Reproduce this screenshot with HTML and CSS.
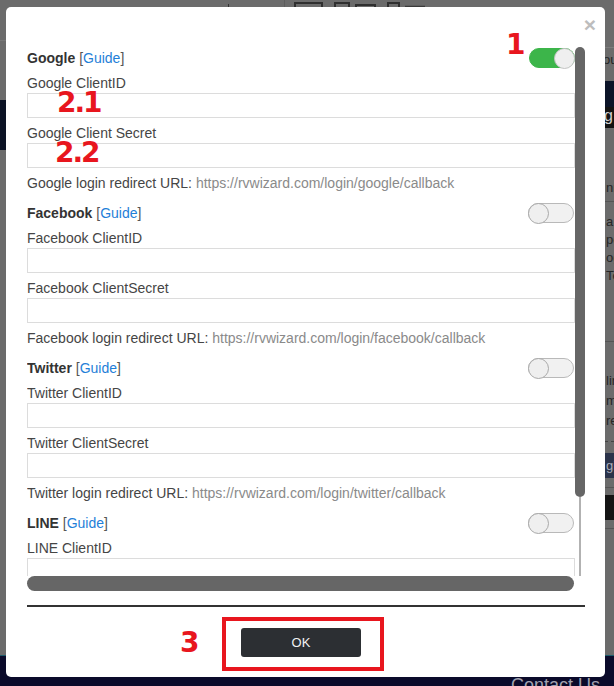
FILE: index.html
```html
<!DOCTYPE html>
<html lang="en">
<head>
<meta charset="utf-8">
<title>Social login settings</title>
<link rel="stylesheet" href="styles.css">
</head>
<body>
<div class="page">
  <div class="page-main">
    <div class="strip strip-left">
      <div class="ls-top"></div>
      <div class="ls-gap"></div>
      <div class="ls-navy"></div>
    </div>
    <div class="page-center">
      <svg class="toolbar" width="599" height="40" viewBox="0 0 599 40">
        <line x1="222.5" y1="4" x2="222.5" y2="8" stroke="#333" stroke-width="1"/>
        <line x1="278.5" y1="0" x2="278.5" y2="40" stroke="#5d5d5d" stroke-width="1"/>
        <rect x="289" y="3" width="27" height="20" fill="none" stroke="#2f2f2f" stroke-width="2"/>
        <rect x="329" y="3" width="14" height="20" fill="none" stroke="#2f2f2f" stroke-width="2"/>
        <rect x="350" y="5" width="19" height="18" fill="none" stroke="#2f2f2f" stroke-width="2"/>
        <rect x="382" y="3" width="11" height="20" fill="none" stroke="#2f2f2f" stroke-width="2"/>
        <line x1="399" y1="6.5" x2="419" y2="6.5" stroke="#3a3a3a" stroke-width="1.5"/>
      </svg>
    </div>
    <div class="strip strip-right">
      <div class="rs-top"></div>
      <div class="rs-text rs-ou">ou</div>
      <div class="rs-navy"></div>
      <div class="rs-black">g</div>
      <div class="rs-gap53"></div>
      <div class="rs-text rs-row14">nn</div>
      <div class="rs-rule rs-rule-a"></div>
      <div class="rs-list">
        <div class="rs-text rs-row18">a</div>
        <div class="rs-text rs-row18">pe</div>
        <div class="rs-text rs-row18">og</div>
        <div class="rs-text rs-row18">Te</div>
      </div>
      <div class="rs-rule rs-rule-b"></div>
      <div class="rs-list2">
        <div class="rs-text rs-row20">lir</div>
        <div class="rs-text rs-row20">m</div>
        <div class="rs-text rs-row20">re</div>
      </div>
      <div class="rs-dash"></div>
      <div class="rs-slate">gi</div>
      <div class="rs-rule rs-rule-c"></div>
      <div class="rs-blk2"></div>
      <div class="rs-rule rs-rule-d"></div>
    </div>
  </div>
  <div class="page-footer"><span class="contact">Contact Us</span></div>
</div>

<div class="modal">
  <div class="modal-header">
    <span class="close">×</span>
  </div>

  <div class="scrollbox">
    <div class="viewport">
      <section class="provider">
        <div class="provider-title">
          <div><b class="name">Google</b> <span class="bracket">[</span><a class="guide">Guide</a><span class="bracket">]</span></div>
          <span class="toggle on"><span class="knob"></span></span>
        </div>
        <div class="field-label">Google ClientID</div>
        <input class="field-input" type="text">
        <div class="field-label">Google Client Secret</div>
        <input class="field-input" type="text">
        <div class="redirect">Google login redirect URL: <span class="url">https://rvwizard.com/login/google/callback</span></div>
      </section>

      <section class="provider">
        <div class="provider-title">
          <div><b class="name">Facebook</b> <span class="bracket">[</span><a class="guide">Guide</a><span class="bracket">]</span></div>
          <span class="toggle"><span class="knob"></span></span>
        </div>
        <div class="field-label">Facebook ClientID</div>
        <input class="field-input" type="text">
        <div class="field-label">Facebook ClientSecret</div>
        <input class="field-input" type="text">
        <div class="redirect">Facebook login redirect URL: <span class="url">https://rvwizard.com/login/facebook/callback</span></div>
      </section>

      <section class="provider">
        <div class="provider-title">
          <div><b class="name">Twitter</b> <span class="bracket">[</span><a class="guide">Guide</a><span class="bracket">]</span></div>
          <span class="toggle"><span class="knob"></span></span>
        </div>
        <div class="field-label">Twitter ClientID</div>
        <input class="field-input" type="text">
        <div class="field-label">Twitter ClientSecret</div>
        <input class="field-input" type="text">
        <div class="redirect">Twitter login redirect URL: <span class="url">https://rvwizard.com/login/twitter/callback</span></div>
      </section>

      <section class="provider">
        <div class="provider-title">
          <div><b class="name">LINE</b> <span class="bracket">[</span><a class="guide">Guide</a><span class="bracket">]</span></div>
          <span class="toggle"><span class="knob"></span></span>
        </div>
        <div class="field-label">LINE ClientID</div>
        <input class="field-input" type="text">
        <div class="field-label">LINE ClientSecret</div>
        <input class="field-input" type="text">
        <div class="redirect">LINE login redirect URL: <span class="url">https://rvwizard.com/login/line/callback</span></div>
      </section>
    </div>
    <div class="vscroll">
      <div class="vthumb"></div>
      <div class="vtrack"></div>
    </div>
    <div class="hscroll"><div class="hthumb"></div></div>
    <div class="corner"></div>
  </div>

  <div class="separator"></div>

  <div class="modal-footer">
    <div class="mark-box">
      <button class="ok-btn" type="button">OK</button>
    </div>
  </div>

  <span class="mark mark-1">1</span>
  <span class="mark mark-21">2.1</span>
  <span class="mark mark-22">2.2</span>
  <span class="mark mark-3">3</span>
</div>
</body>
</html>
```

FILE: styles.css
```css
html, body {
  margin: 0;
  padding: 0;
}
body {
  width: 614px;
  height: 686px;
  overflow: hidden;
  background: #6b6b6b;
  font-family: "Liberation Sans", Arial, sans-serif;
  font-size: 14px;
}

/* ---------- background page (behind overlay) ---------- */
.page {
  height: 686px;
  display: flex;
  flex-direction: column;
}
.page-main {
  flex: 1;
  display: grid;
  grid-template-columns: 6px 1fr 9px;
  min-height: 0;
}
.strip {
  display: flex;
  flex-direction: column;
  overflow: hidden;
}
.ls-top { height: 40px; border-bottom: 1px solid #777; }
.ls-gap { height: 59px; }
.ls-navy { height: 50px; background: #0c1325; }

.toolbar { display: block; }

.rs-top { height: 47px; border-bottom: 1px solid #7c7c7c; }
.rs-text {
  color: #262626;
  font-size: 13px;
  white-space: nowrap;
  text-indent: 1px;
}
.rs-ou { height: 33px; line-height: 24px; text-indent: -2px; }
.rs-navy { height: 26px; background: #0c1428; }
.rs-black {
  height: 21px;
  background: #131313;
  color: #cfcfcf;
  font-size: 16px;
  line-height: 17px;
  text-indent: -1px;
}
.rs-gap53 { height: 53px; }
.rs-row14 { height: 14px; line-height: 14px; }
.rs-rule { border-bottom: 1px solid #555; }
.rs-rule-a { height: 6px; }
.rs-list { padding-top: 11px; }
.rs-row18 { height: 18px; line-height: 18px; }
.rs-rule-b { height: 56px; }
.rs-list2 { padding-top: 29px; }
.rs-row20 { height: 20px; line-height: 20px; }
.rs-dash { height: 10px; border-bottom: 1px dashed #444; }
.rs-slate {
  margin-top: 11px;
  height: 25px;
  background: #2b334a;
  color: #a9acb8;
  font-size: 13px;
  line-height: 25px;
  text-indent: 1px;
}
.rs-rule-c { height: 9px; }
.rs-blk2 { margin-top: 7px; height: 25px; background: #141414; }
.rs-rule-d { height: 8px; }

.page-footer {
  height: 31px;
  box-sizing: border-box;
  border-top: 1px solid #1e5b6a;
  background: #0a0a2a;
  display: flex;
  justify-content: flex-end;
  padding: 18px 14px 0 0;
  overflow: hidden;
}
.contact {
  color: #a2a2b0;
  font-size: 18px;
  line-height: 22px;
}

/* ---------- modal ---------- */
.modal {
  position: fixed;
  left: 6px;
  top: 7px;
  width: 599px;
  height: 670px;
  box-sizing: border-box;
  background: #fff;
  border-radius: 5px;
  padding: 0 20px 0 21px;
  display: flex;
  flex-direction: column;
}
.modal-header {
  height: 40px;
  display: flex;
  justify-content: flex-end;
  align-items: flex-start;
}
.close {
  margin-top: 7px;
  margin-right: -11px;
  font-size: 21px;
  font-weight: bold;
  line-height: 21px;
  color: #bdbdbd;
}

.scrollbox {
  height: 544px;
  display: grid;
  grid-template-columns: 1fr 10px;
  grid-template-rows: 529px 15px;
}
.viewport {
  overflow: hidden;
  padding-top: 1px;
  min-width: 0;
}
.provider {
  padding-bottom: 10px;
}
.provider-title {
  height: 20px;
  line-height: 20px;
  display: flex;
  justify-content: space-between;
  align-items: center;
  color: #333;
}
.name {
  font-weight: bold;
  color: #333;
}
.bracket { color: #555; }
.guide {
  color: #1f80d8;
  text-decoration: none;
}
.toggle {
  width: 46px;
  height: 20px;
  box-sizing: border-box;
  border: 1px solid #b9b9b9;
  border-radius: 10px;
  background: #f1f1f1;
  display: flex;
  align-items: center;
  justify-content: flex-start;
  margin-right: 1px;
}
.toggle .knob {
  width: 21px;
  height: 21px;
  flex: none;
  box-sizing: border-box;
  border-radius: 50%;
  border: 1px solid #a9a9a9;
  background: #efefef;
  margin-left: -1px;
}
.toggle.on {
  background: #3cb54a;
  border-color: #3cb54a;
  justify-content: flex-end;
  margin-right: 0;
}
.toggle.on .knob {
  margin-left: 0;
  margin-right: -1px;
  border-color: #c4c4c4;
}
.field-label {
  margin-top: 5px;
  height: 20px;
  line-height: 20px;
  color: #454545;
}
.field-input {
  display: block;
  width: 100%;
  height: 25px;
  box-sizing: border-box;
  margin: 0;
  padding: 0 6px;
  border: 1px solid #dcdcdc;
  background: #fff;
  font: inherit;
}
.redirect {
  margin-top: 5px;
  height: 20px;
  line-height: 20px;
  color: #454545;
  white-space: nowrap;
}
.url { color: #8a8a8a; }

.vscroll {
  display: flex;
  flex-direction: column;
  align-items: center;
}
.vthumb {
  width: 10px;
  height: 450px;
  border-radius: 5px;
  background: #666;
  flex: none;
}
.vtrack {
  flex: 1;
  width: 2px;
  background: #b2b2b2;
}
.hscroll {
  padding-right: 1px;
}
.hthumb {
  height: 15px;
  border-radius: 7.5px;
  background: #666;
}

.separator {
  margin-top: 14px;
  height: 2px;
  background: #333;
}

.modal-footer {
  padding-top: 10px;
  padding-right: 6px;
  display: flex;
  justify-content: center;
}
.mark-box {
  border: 4px solid #e8161e;
  padding: 7px 19px 10px 15px;
}
.ok-btn {
  display: block;
  width: 120px;
  height: 29px;
  margin: 0;
  border: 0;
  border-radius: 3px;
  background: #2c2f33;
  color: #f2f2f2;
  font-family: "Liberation Sans", Arial, sans-serif;
  font-size: 13px;
  padding: 0;
}

/* annotation numbers drawn over the dialog */
.mark {
  position: absolute;
  font-family: "DejaVu Sans", sans-serif;
  font-weight: bold;
  font-size: 28px;
  line-height: 21px;
  color: #e8161e;
}
.mark-21, .mark-22 { letter-spacing: -2px; }
.mark-1 { left: 500px; top: 27px; }
.mark-21 { left: 51px; top: 85px; }
.mark-22 { left: 49px; top: 135px; }
.mark-3 { left: 174px; top: 625px; }
```
